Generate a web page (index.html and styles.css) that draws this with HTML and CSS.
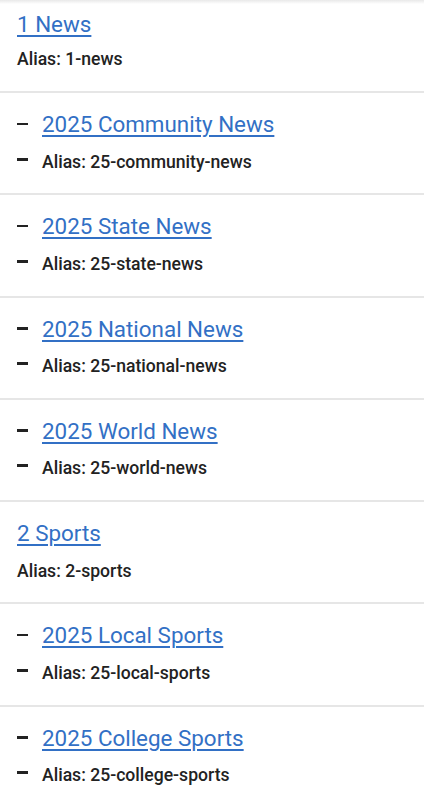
FILE: index.html
```html
<!DOCTYPE html>
<html lang="en">
<head>
<meta charset="utf-8">
<title>Categories</title>
<link rel="stylesheet" href="styles.css">
</head>
<body>
<ul class="list">
  <li class="item first">
    <div class="line title-line"><a class="title" href="#">1 News</a></div>
    <div class="line alias">Alias: 1-news</div>
  </li>
  <li class="item">
    <div class="line title-line"><span class="dash"></span><a class="title" href="#">2025 Community News</a></div>
    <div class="line alias"><span class="dash"></span>Alias: 25-community-news</div>
  </li>
  <li class="item">
    <div class="line title-line"><span class="dash"></span><a class="title" href="#">2025 State News</a></div>
    <div class="line alias"><span class="dash"></span>Alias: 25-state-news</div>
  </li>
  <li class="item">
    <div class="line title-line"><span class="dash"></span><a class="title" href="#">2025 National News</a></div>
    <div class="line alias"><span class="dash"></span>Alias: 25-national-news</div>
  </li>
  <li class="item">
    <div class="line title-line"><span class="dash"></span><a class="title" href="#">2025 World News</a></div>
    <div class="line alias"><span class="dash"></span>Alias: 25-world-news</div>
  </li>
  <li class="item">
    <div class="line title-line"><a class="title" href="#">2 Sports</a></div>
    <div class="line alias">Alias: 2-sports</div>
  </li>
  <li class="item">
    <div class="line title-line"><span class="dash"></span><a class="title" href="#">2025 Local Sports</a></div>
    <div class="line alias"><span class="dash"></span>Alias: 25-local-sports</div>
  </li>
  <li class="item">
    <div class="line title-line"><span class="dash"></span><a class="title" href="#">2025 College Sports</a></div>
    <div class="line alias"><span class="dash"></span>Alias: 25-college-sports</div>
  </li>
</ul>
</body>
</html>
```
FILE: styles.css
```css
html, body {
  margin: 0;
  padding: 0;
}
body {
  font-family: Roboto, "Noto Sans", sans-serif;
  background: linear-gradient(#e9e9e9, #ffffff 4px) no-repeat #ffffff;
  color: #222;
}
.list {
  list-style: none;
  margin: 0;
  padding: 0;
}
.item {
  display: flex;
  flex-direction: column;
  gap: 7px;
  padding: 15px 17px 18.3px;
  border-bottom: 2px solid #e6e6e6;
}
.item.first {
  gap: 4px;
  padding-top: 8px;
  padding-bottom: 19px;
}
.line {
  display: block;
  white-space: nowrap;
}
.title-line {
  font-size: 22.4px;
  line-height: 33.6px;
}
.title {
  color: #3270c5;
  text-decoration: underline;
  text-underline-offset: 3px;
  text-decoration-thickness: 1.5px;
}
.alias {
  font-size: 17.6px;
  line-height: 26.4px;
  font-weight: 500;
  color: #222;
}
.dash {
  display: inline-block;
  vertical-align: baseline;
  width: 11px;
  height: 2.5px;
  margin: 0 14px 7px 0;
  background: #222;
}
.alias .dash {
  height: 3px;
  margin-bottom: 7px;
}
```
